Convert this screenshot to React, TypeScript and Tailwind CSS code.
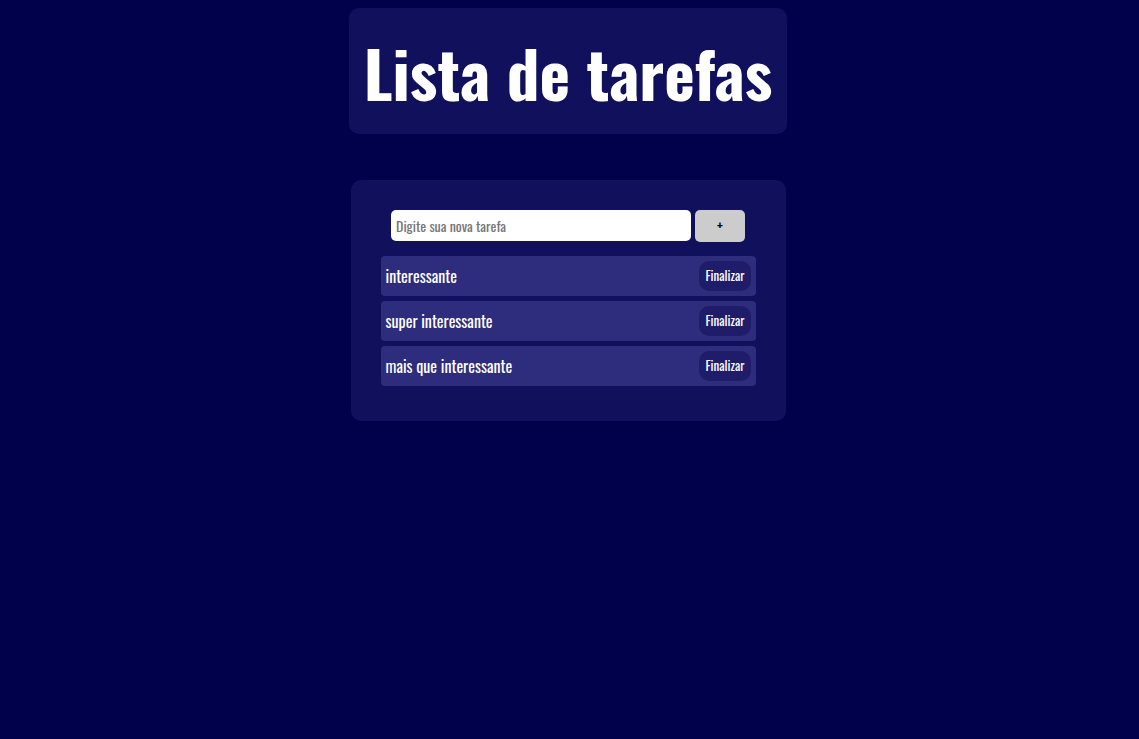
import React, { useState } from 'react';

const font = "font-['Oswald','Liberation_Sans_Narrow','DejaVu_Sans_Condensed','Roboto',sans-serif]";

const App: React.FC = () => {
  const [tarefas] = useState(['interessante', 'super interessante', 'mais que interessante']);
  const [nova, setNova] = useState('');

  return (
    <div className={`min-h-screen bg-[#00004b] flex flex-col items-center pt-2 pr-[3px] ${font}`}>
      {/* Titulo */}
      <div className="w-[438px] h-[126px] bg-[#11105d] rounded-[10px] flex items-center justify-center">
        <h1 className="text-[65px] font-bold text-white leading-none">Lista de tarefas</h1>
      </div>

      {/* Lista */}
      <div className="mt-[46px] w-[435px] bg-[#11105d] rounded-[10px] pt-[30px] pb-[35px] px-[30px] flex flex-col items-center">
        <div className="flex gap-1 mb-[14px]">
          <input
            value={nova}
            onChange={(e) => setNova(e.target.value)}
            placeholder="Digite sua nova tarefa"
            className="w-[300px] h-[31px] bg-white rounded-[5px] px-[5px] text-[14px] text-black placeholder:text-[#767676] outline-none"
          />
          <button className="w-[50px] h-[32px] bg-[#cccccc] rounded-[5px] text-[13px] font-bold text-black">+</button>
        </div>
        <div className="w-full flex flex-col gap-[5px]">
          {tarefas.map((t) => (
            <div key={t} className="h-[40px] bg-[#2e2c7d] rounded-[4px] flex items-center justify-between px-[5px]">
              <span className="text-white text-[16px]">{t}</span>
              <button className="h-[30px] px-[6px] bg-[#1f1d6a] rounded-[10px] text-white text-[13px]">Finalizar</button>
            </div>
          ))}
        </div>
      </div>
    </div>
  );
};

export default App;
